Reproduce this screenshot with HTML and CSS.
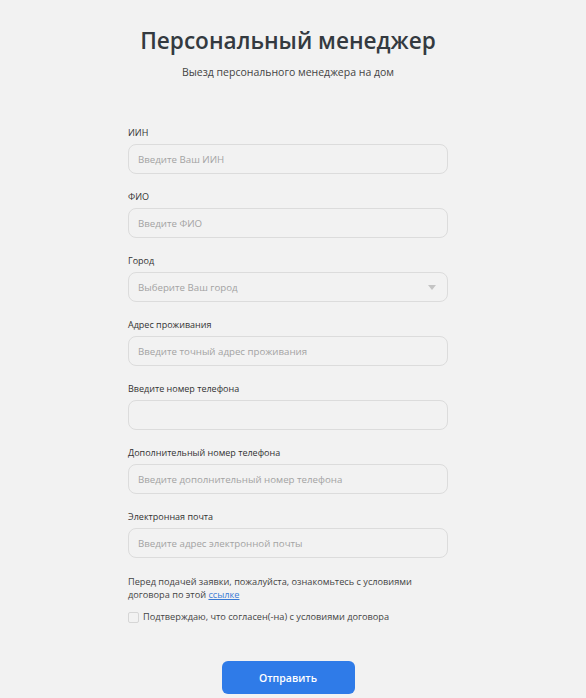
FILE: index.html
```html
<!DOCTYPE html>
<html lang="ru">
<head>
<meta charset="utf-8">
<title>Персональный менеджер</title>
<link rel="stylesheet" href="styles.css">
</head>
<body>
<div class="wrap">
  <h1 class="title">Персональный менеджер</h1>
  <p class="subtitle">Выезд персонального менеджера на дом</p>
  <form class="form">
    <div class="field">
      <label class="label">ИИН</label>
      <input class="input" type="text" placeholder="Введите Ваш ИИН">
    </div>
    <div class="field">
      <label class="label">ФИО</label>
      <input class="input" type="text" placeholder="Введите ФИО">
    </div>
    <div class="field">
      <label class="label">Город</label>
      <div class="select">
        <span class="select-ph">Выберите Ваш город</span>
        <span class="caret"></span>
      </div>
    </div>
    <div class="field">
      <label class="label">Адрес проживания</label>
      <input class="input" type="text" placeholder="Введите точный адрес проживания">
    </div>
    <div class="field">
      <label class="label">Введите номер телефона</label>
      <input class="input" type="text">
    </div>
    <div class="field">
      <label class="label">Дополнительный номер телефона</label>
      <input class="input" type="text" placeholder="Введите дополнительный номер телефона">
    </div>
    <div class="field">
      <label class="label">Электронная почта</label>
      <input class="input" type="text" placeholder="Введите адрес электронной почты">
    </div>
    <p class="note">Перед подачей заявки, пожалуйста, ознакомьтесь с условиями<br>договора по этой <a class="link" href="#">ссылке</a></p>
    <label class="check">
      <span class="box"></span>
      <span>Подтверждаю, что согласен(-на) с условиями договора</span>
    </label>
    <div class="actions">
      <button class="btn" type="button">Отправить</button>
    </div>
  </form>
</div>
</body>
</html>
```

FILE: styles.css
```css
* { box-sizing: border-box; }
html, body {
  margin: 0;
  padding: 0;
  background: #f2f2f2;
}
body {
  font-family: "Open Sans", "Noto Sans", sans-serif;
  color: #333;
}
.wrap {
  width: 576px;
  padding-top: 24px;
  display: flex;
  flex-direction: column;
  align-items: center;
}
.title {
  margin: 0;
  font-size: 22.6px;
  line-height: 34px;
  font-weight: 600;
  color: #343a40;
}
.subtitle {
  margin: 6px 0 0;
  font-size: 10.5px;
  line-height: 16px;
  color: #444;
}
.form {
  width: 320px;
  margin-top: 45px;
  display: flex;
  flex-direction: column;
}
.field {
  display: flex;
  flex-direction: column;
  margin-bottom: 15px;
}
.label {
  font-size: 9px;
  line-height: 16px;
  color: #333;
  margin-bottom: 3px;
}
.input, .select {
  height: 30px;
  border: 1px solid #dcdcdc;
  border-radius: 8px;
  background: #f2f2f2;
  padding: 0 9px;
  font-family: inherit;
  font-size: 9.7px;
  color: #333;
  outline: none;
}
.input::placeholder { color: #a3a3a3; }
.select {
  display: flex;
  align-items: center;
  justify-content: space-between;
}
.select-ph { color: #a3a3a3; }
.caret {
  width: 0;
  height: 0;
  border-left: 4px solid transparent;
  border-right: 4px solid transparent;
  border-top: 5px solid #c4c4c4;
  margin-right: 2px;
}
.note {
  margin: 2px 0 0;
  font-size: 9.2px;
  line-height: 13px;
  color: #444;
}
.link {
  color: #3a7bd5;
  text-decoration: underline;
}
.check {
  display: flex;
  align-items: center;
  gap: 4px;
  margin-top: 9px;
  font-size: 9.2px;
  line-height: 14px;
  color: #444;
}
.box {
  width: 11px;
  height: 11px;
  border: 1px solid #d6d6d6;
  border-radius: 2px;
  background: #f2f2f2;
}
.actions {
  display: flex;
  justify-content: center;
  margin-top: 37px;
}
.btn {
  width: 133px;
  height: 33px;
  border: none;
  border-radius: 6px;
  background: #2f7be8;
  color: #fff;
  font-family: inherit;
  font-size: 10.5px;
  font-weight: 600;
}
```
